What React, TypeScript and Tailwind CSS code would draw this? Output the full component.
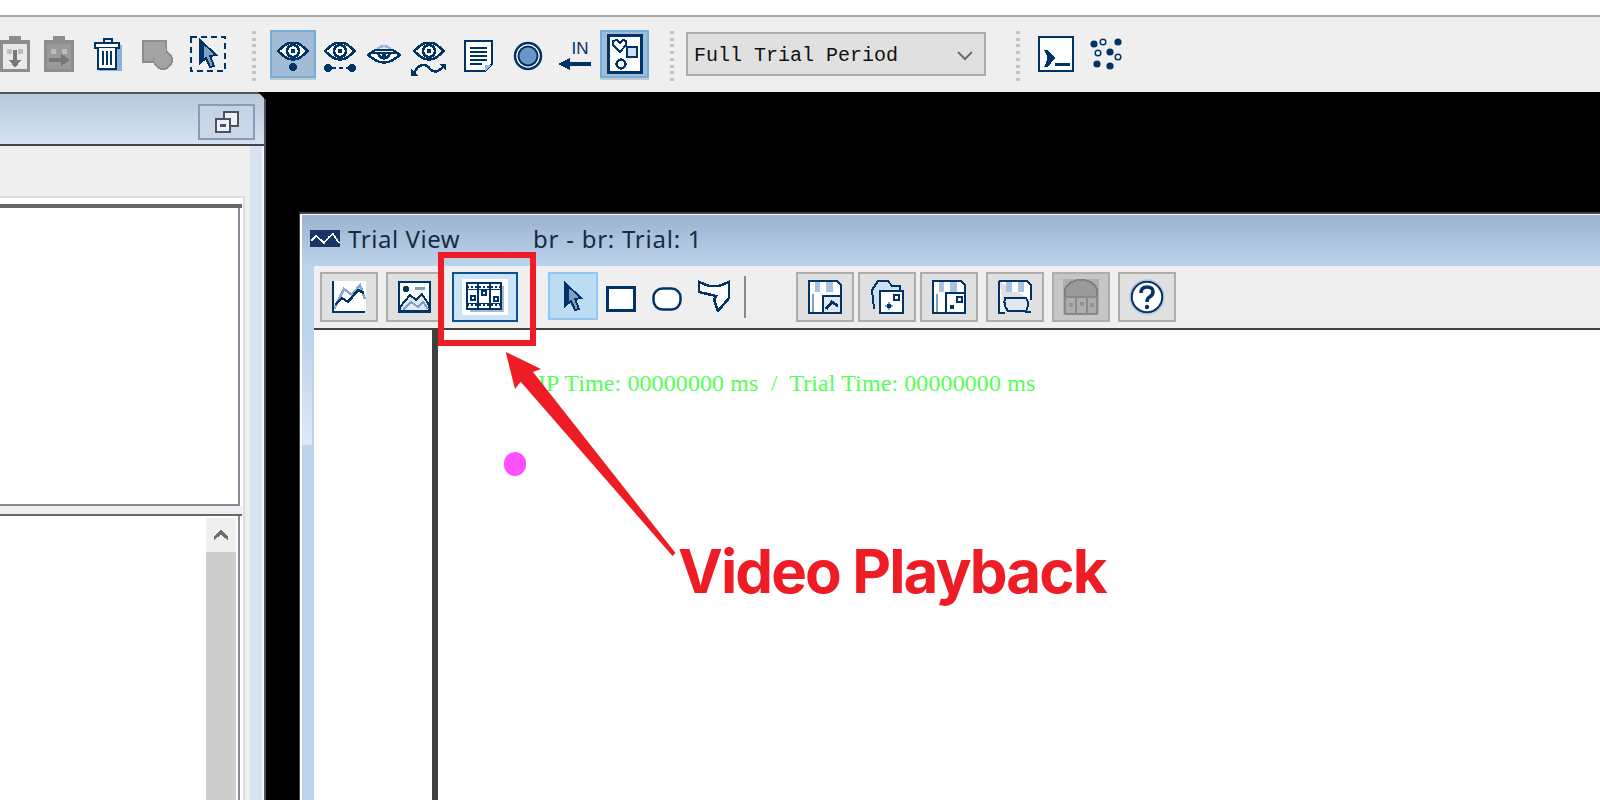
import React from "react";

const N = "#003366";
const L = "#7f9fc6";

function Eye({ y = 0, x = 0, closed = false }: { y?: number; x?: number; closed?: boolean }) {
  if (closed) {
    return (
      <g transform={`translate(${x},${y})`}>
        <path d="M10 5 Q17 -1 24 5" fill="none" stroke="#9db7d6" strokeWidth="2.5" />
        <path d="M1 11 L8 6 H26 L33 11 L26 16 Q17 21 8 16 Z" fill="#fff" stroke={N} strokeWidth="2.5" />
        <path d="M4 8 H30 V10 H4 Z" fill={N} />
        <path d="M11 10 Q17 19 23 10" fill="none" stroke={N} strokeWidth="2.5" />
        <rect x="15" y="10" width="4" height="3" fill={N} />
      </g>
    );
  }
  return (
    <g transform={`translate(${x},${y})`}>
      <path d="M1 9 L8 3 Q16 -2 24 3 L31 9 L24 15 Q16 20 8 15 Z" fill="#fff" stroke={N} strokeWidth="2.5" />
      <circle cx="16" cy="9" r="6" fill="#fff" stroke={N} strokeWidth="2.5" />
      <rect x="14" y="7" width="4" height="4" fill={N} />
    </g>
  );
}

function Svg({ w, h, ml = 0, mt = 0, children, smooth = false }: { w: number; h: number; ml?: number; mt?: number; children: React.ReactNode; smooth?: boolean }) {
  return (
    <svg
      width={w}
      height={h}
      viewBox={`0 0 ${w} ${h}`}
      style={{ marginLeft: ml, marginTop: mt, flex: "none", display: "block" }}
      shapeRendering={smooth ? "geometricPrecision" : "crispEdges"}
    >
      {children}
    </svg>
  );
}

function Grip({ ml }: { ml: number }) {
  return (
    <div style={{ marginLeft: ml }} className="mt-[14px] flex h-[50px] w-[4px] flex-none flex-col justify-between">
      {[0, 1, 2, 3, 4, 5, 6, 7].map((i) => (
        <div key={i} className="h-[3px] w-[4px] bg-[#c4c4c4]" />
      ))}
    </div>
  );
}

function Clip({ right }: { right?: boolean }) {
  const g = "#8d8d8d";
  return (
    <>
      <rect x="0" y="4" width="30" height="32" fill={g} />
      <rect x="3" y="8" width="24" height="25" fill={right ? "#9a9a9a" : "#e9e9e9"} />
      <rect x="9" y="0" width="12" height="7" fill={g} />
      <rect x="5" y="4" width="20" height="4" fill={g} />
      <rect x="7" y="13" width="5" height="5" fill="#bdbdbd" />
      <rect x="18" y="13" width="5" height="5" fill="#bdbdbd" />
      {right ? (
        <path d="M5 22 H17 V18 L26 24 L17 30 V26 H5 Z" fill="#777" />
      ) : (
        <path d="M13 14 H17 V24 H21 L15 32 L9 24 H13 Z" fill="#777" />
      )}
    </>
  );
}

function Trash() {
  return (
    <>
      <rect x="5" y="7" width="23" height="26" fill="#8fb0d6" />
      <path d="M10 4 V1 H18 V4" fill="none" stroke={N} strokeWidth="2" />
      <path d="M1 5 H25 V10 H1 Z" fill="#fff" stroke={N} strokeWidth="2" />
      <path d="M4 10 V31 H22 V10" fill="#fff" stroke={N} strokeWidth="2.5" />
      <path d="M9 13 V27 M13 13 V27 M17 13 V27" stroke={N} strokeWidth="2" />
    </>
  );
}

function Cursor({ x = 0, y = 0 }: { x?: number; y?: number }) {
  return (
    <g transform={`translate(${x},${y})`}>
      <path d="M2 1 L18 16 L12 17 L16 27 L12 28 L8 19 L2 24 Z" fill={L} stroke={N} strokeWidth="2" />
      <path d="M2 1 V24 L6 21 V6 Z" fill={N} />
    </g>
  );
}

function SmallBtn({ children, disabled, ml = 8 }: { children: React.ReactNode; disabled?: boolean; ml?: number }) {
  return (
    <div
      style={{ marginLeft: ml }}
      className={`flex h-[50px] w-[58px] flex-none items-center justify-center border-2 border-[#adadad] ${disabled ? "bg-[#c6c6c6]" : "bg-[#e0e0e0]"}`}
    >
      {children}
    </div>
  );
}

function Floppy({ children }: { children?: React.ReactNode }) {
  return (
    <Svg w={34} h={34}>
      <path d="M1 1 H29 L33 5 V33 H1 Z" fill="#fff" stroke={N} strokeWidth="2" />
      <rect x="7" y="2" width="18" height="10" fill="#a9c2df" />
      <rect x="12" y="2" width="6" height="10" fill="#fff" />
      <rect x="4" y="14" width="2" height="18" fill="#7f9fc6" />
      {children}
    </Svg>
  );
}

export default function App() {
  return (
    <div className="relative flex h-[800px] w-[1600px] flex-col overflow-hidden bg-white font-['Noto_Sans',sans-serif]">
      {/* header strip */}
      <div className="h-[15px] flex-none bg-white" />
      <div className="flex h-[77px] flex-none items-start border-t-2 border-[#a6a6a6] bg-[#efefef]">
        <Svg w={30} h={36} mt={19}><Clip /></Svg>
        <Svg w={32} h={36} ml={14} mt={19}><Clip right /></Svg>
        <Svg w={30} h={34} ml={18} mt={21}><Trash /></Svg>
        <Svg w={32} h={30} ml={18} mt={23}>
          <rect x="1" y="1" width="23" height="21" fill="#a3a3a3" stroke="#8d8d8d" strokeWidth="2" />
          <circle cx="21" cy="20" r="9" fill="#a3a3a3" stroke="#8d8d8d" strokeWidth="2" />
          <rect x="12" y="8" width="12" height="14" fill="#a3a3a3" />
        </Svg>
        <Svg w={36} h={36} ml={16} mt={19}>
          <rect x="1" y="1" width="34" height="34" fill="none" stroke={N} strokeWidth="2" strokeDasharray="6 4" />
          <Cursor x={8} y={3} />
        </Svg>
        <Grip ml={26} />
        {/* active eye */}
        <div className="relative ml-[14px] mt-[13px] flex h-[48px] w-[46px] flex-none flex-col items-center border-2 border-[#73aee0] bg-[#a3bcd5] pt-[10px] shadow-[0_2px_0_#c8c8c8]">
          <Svg w={32} h={32}>
            <Eye />
            <circle cx="16" cy="25" r="4" fill={N} />
          </Svg>
        </div>
        <Svg w={34} h={36} ml={7} mt={25}>
          <Eye x={1} />
          <circle cx="5" cy="26" r="4" fill={N} />
          <circle cx="29" cy="26" r="4" fill={N} />
          <path d="M9 26 H25" stroke={N} strokeWidth="2" strokeDasharray="4 3" />
        </Svg>
        <Svg w={34} h={24} ml={10} mt={27}><Eye closed /></Svg>
        <Svg w={36} h={36} ml={10} mt={25}>
          <Eye x={2} />
          <path d="M2 32 L7 25 Q14 20 19 27 Q25 33 33 24" fill="none" stroke={N} strokeWidth="2.5" />
          <path d="M0 34 V27 L7 34 Z M35 22 V29 L28 22 Z" fill={N} />
        </Svg>
        <Svg w={30} h={32} ml={17} mt={23}>
          <path d="M1 1 H28 V24 L21 31 H1 Z" fill="#fff" stroke={N} strokeWidth="2.5" />
          <path d="M6 8 H23 M6 12 H23 M6 16 H23 M6 20 H23 M6 24 H18" stroke={N} strokeWidth="2" />
          <path d="M21 31 V25 H28 Z" fill="#9db7d6" />
        </Svg>
        <Svg w={30} h={30} ml={19} mt={24} smooth>
          <circle cx="15" cy="15" r="13" fill="#fff" stroke={N} strokeWidth="2.5" />
          <circle cx="15" cy="15" r="9.5" fill="#6b94c7" stroke={N} strokeWidth="2" />
        </Svg>
        <div className="ml-[15px] mt-[23px] flex w-[34px] flex-none flex-col items-center">
          <span className="ml-[10px] font-['Liberation_Sans',sans-serif] text-[17px] leading-[17px] text-[#003366]">IN</span>
          <Svg w={34} h={14}>
            <path d="M0 7 L12 1 V5 H33 V9 H12 V13 Z" fill={N} />
          </Svg>
        </div>
        <div className="ml-[8px] mt-[13px] flex h-[48px] w-[49px] flex-none items-center justify-center border-2 border-[#73aee0] bg-[#a3bcd5] shadow-[0_2px_0_#c8c8c8]">
          <Svg w={36} h={40}>
            <rect x="1.5" y="1.5" width="33" height="37" fill="#fff" stroke={N} strokeWidth="3" />
            <path d="M6 7 L10 6 L13 9 L16 6 L19 7 V11 L13 18 L6 11 Z" fill="#fff" stroke={N} strokeWidth="2" />
            <rect x="20" y="13" width="10" height="10" fill="#cfdff0" stroke={N} strokeWidth="2" />
            <circle cx="14" cy="30" r="4.5" fill="#fff" stroke={N} strokeWidth="2.5" />
          </Svg>
        </div>
        <Grip ml={21} />
        <div className="ml-[12px] mt-[15px] flex h-[44px] w-[300px] flex-none items-center border-2 border-[#adadad] bg-[#e0e0e0] pl-[6px] pr-[10px] pt-[4px]">
          <span className="flex-1 whitespace-pre font-['Liberation_Mono',monospace] text-[20px] leading-none text-[#111]">Full Trial Period</span>
          <Svg w={18} h={10} smooth>
            <path d="M2 1 L9 8 L16 1" fill="none" stroke="#6e6e6e" strokeWidth="2" />
          </Svg>
        </div>
        <Grip ml={30} />
        <div className="ml-[18px] mt-[19px] h-[36px] w-[36px] flex-none">
          <Svg w={36} h={36}>
            <rect x="1" y="1" width="34" height="34" fill="#fff" stroke={N} strokeWidth="2.5" />
            <path d="M6 14 H10 L17 22 L10 31 H6 Q12 22 6 14 Z" fill={N} />
            <rect x="17" y="27" width="15" height="3" fill={N} />
          </Svg>
        </div>
        <Svg w={34} h={32} ml={16} mt={21} smooth>
          {[[4, 6], [28, 4], [20, 14], [20, 28], [7, 26]].map(([x, y], i) => (
            <circle key={i} cx={x} cy={y} r="3.6" fill={N} />
          ))}
          {[[13, 4], [8, 15], [28, 19]].map(([x, y], i) => (
            <circle key={i} cx={x} cy={y} r="2.8" fill="#fff" stroke={N} strokeWidth="1.5" />
          ))}
        </Svg>
      </div>

      {/* desktop */}
      <div className="flex min-h-0 flex-1 bg-black">
        {/* left panel */}
        <div className="flex h-full w-[266px] flex-none flex-col border-r-2 border-t-2 border-[#555] [clip-path:polygon(0_0,258px_0,266px_8px,266px_100%,0_100%)]">
          <div className="flex h-[52px] flex-none items-start justify-end border-b-2 border-[#444] bg-gradient-to-b from-[#b8c9da] to-[#d5e3f0] pr-[9px] pt-[10px]">
            <div className="flex h-[36px] w-[57px] items-center justify-center border-2 border-[#8a9ab8] bg-[#c8d5e4]/60">
              <Svg w={24} h={22}>
                <rect x="9" y="1" width="14" height="14" fill="#eef1f5" stroke="#4c5266" strokeWidth="2" />
                <rect x="1" y="8" width="14" height="13" fill="#eef1f5" stroke="#4c5266" strokeWidth="2" />
                <rect x="5" y="13" width="6" height="3" fill="#4c5266" />
              </Svg>
            </div>
          </div>
          <div className="flex min-h-0 flex-1">
            <div className="min-w-0 flex-1 bg-[#efefef] pt-[50px]">
              <div className="mr-[5px] flex h-full flex-col border-r-2 border-t-2 border-[#dcdcdc] bg-white pt-[6px]">
                <div className="w-[242px]">
                  <div className="h-[302px] border-t-4 border-[#666]">
                    <div className="mr-[2px] h-full border-b-2 border-r-2 border-[#858a96] bg-white" />
                  </div>
                  <div className="h-[8px] bg-[#efefef]" />
                </div>
                <div className="w-[242px] flex-1 border-t-2 border-[#666]">
                  <div className="mr-[2px] flex h-full justify-end border-r-2 border-[#858a96] bg-white pr-[2px] pt-[2px]">
                    <div className="flex h-full w-[30px] flex-col">
                      <div className="flex h-[34px] flex-none items-center justify-center bg-[#efefef]">
                        <Svg w={16} h={12}>
                          <path d="M1 11 V7 L8 1 L15 7 V11 L8 6 Z" fill="#6e6e6e" />
                        </Svg>
                      </div>
                      <div className="flex-1 bg-[#cccccc]" />
                    </div>
                  </div>
                </div>
              </div>
            </div>
            <div className="w-[12px] flex-none bg-[#d6e3f1]" />
            <div className="w-[2px] flex-none bg-[#f4f7fb]" />
          </div>
        </div>

        {/* Trial View window */}
        <div className="ml-[33px] mt-[120px] flex min-w-0 flex-1 flex-col border-l border-t-2 border-[#444]">
          <div className="flex min-h-0 flex-1 flex-col border-l-2 border-t border-white">
            <div className="flex h-[51px] flex-none items-center bg-gradient-to-b from-[#9bb3d0] to-[#bcd3ec] pb-[3px] pl-[8px] text-[24px] leading-none text-[#1a2a44]">
              <Svg w={30} h={17} mt={-2}>
                <rect width="30" height="17" fill="#1a3564" />
                <path d="M1 11 L6 6 L11 10 L14 13 L19 7 L23 4 L29 13" fill="none" stroke="#fff" strokeWidth="1.5" />
              </Svg>
              <span className="ml-[8px] w-[185px] flex-none whitespace-pre tracking-[0.55px]">Trial View</span>
              <span className="whitespace-pre tracking-[0.75px]">br - br: Trial: 1</span>
            </div>
            <div className="flex min-h-0 flex-1">
              <div className="w-[12px] flex-none bg-[#bcd3ec] pt-[70px]">
                <div className="mr-[2px] h-[109px] bg-gradient-to-b from-[#bcd3ec] to-[#dde9f6]" />
              </div>
              <div className="flex min-w-0 flex-1 flex-col">
                <div className="flex h-[64px] flex-none items-start border-b-2 border-[#404040] bg-[#efefef] pt-[6px]">
                  <SmallBtn ml={6}>
                    <Svg w={34} h={32}>
                      <rect x="2" y="0" width="32" height="30" fill="#fff" />
                      <path d="M2 28 L12 8 L20 14 L28 4 L33 18" fill="none" stroke="#8aa8cb" strokeWidth="2.5" />
                      <path d="M3 24 L10 17 L16 21 L26 9 L32 12" fill="none" stroke={N} strokeWidth="2.5" />
                      <path d="M1 0 V31 H33" fill="none" stroke={N} strokeWidth="2" />
                    </Svg>
                  </SmallBtn>
                  <SmallBtn>
                    <Svg w={34} h={32}>
                      <rect x="1" y="1" width="31" height="30" fill="#fff" stroke={N} strokeWidth="2" />
                      <circle cx="8" cy="8" r="3" fill={N} />
                      <rect x="17" y="6" width="10" height="3" fill={L} />
                      <path d="M2 26 L12 14 L18 19 L24 13 L31 24 V30 H2 Z" fill="#dfe8f3" stroke={N} strokeWidth="2" />
                      <path d="M5 29 L13 21 L20 26 L25 21 L30 28" fill="none" stroke={L} strokeWidth="2" />
                    </Svg>
                  </SmallBtn>
                  <div className="ml-[8px] flex h-[50px] w-[66px] flex-none items-center justify-center border-2 border-[#0b5394] bg-[#cce4f7]">
                    <div className="flex h-[36px] w-[46px] items-center justify-center bg-white">
                      <Svg w={38} h={30}>
                        <rect x="4" y="4" width="34" height="26" fill="#a9bbd2" />
                        <rect x="1" y="1" width="34" height="26" fill="#fff" stroke={N} strokeWidth="2" />
                        <path d="M1 5 H35 M1 23 H35" stroke={N} strokeWidth="2" strokeDasharray="2 2" />
                        <path d="M1 7 H35 M1 21 H35" stroke={N} strokeWidth="1" />
                        <path d="M12 1 V27 M24 1 V27" stroke={N} strokeWidth="2" />
                        <rect x="5" y="14" width="4" height="4" fill="#fff" stroke={N} strokeWidth="1.5" />
                        <rect x="16" y="9" width="4" height="4" fill="#fff" stroke={N} strokeWidth="1.5" />
                        <rect x="28" y="15" width="4" height="4" fill="#fff" stroke={N} strokeWidth="1.5" />
                      </Svg>
                    </div>
                  </div>
                  <div className="ml-[30px] flex h-[48px] w-[50px] flex-none items-center justify-center border-2 border-[#90c8f6] bg-[#bcdcf4]">
                    <Svg w={20} h={32}><Cursor y={2} /></Svg>
                  </div>
                  <Svg w={30} h={26} ml={8} mt={14}>
                    <rect x="1.5" y="1.5" width="27" height="23" fill="#fff" stroke={N} strokeWidth="3" />
                  </Svg>
                  <Svg w={30} h={24} ml={16} mt={15} smooth>
                    <rect x="1.5" y="1.5" width="27" height="21" rx="9" fill="#fff" stroke={N} strokeWidth="2.5" />
                  </Svg>
                  <Svg w={32} h={32} ml={16} mt={8}>
                    <path d="M1 2 L11 6 L21 6 L31 2 V18 L20 31 L16 20 L18 16 L1 12 Z" fill="#fff" stroke={N} strokeWidth="2.5" />
                  </Svg>
                  <div className="ml-[14px] mt-[4px] h-[42px] w-[2px] flex-none bg-[#8a8a8a]" />
                  <SmallBtn ml={50}>
                    <Floppy>
                      <rect x="15" y="16" width="18" height="17" fill="#dfe8f3" stroke={N} strokeWidth="2" />
                      <path d="M18 29 L24 22 L30 26" fill="none" stroke={N} strokeWidth="3" />
                    </Floppy>
                  </SmallBtn>
                  <SmallBtn ml={4}>
                    <Svg w={34} h={34}>
                      <path d="M4 29 L2 10 L8 1 H18 L22 6 H30 V12" fill="#cfdff0" stroke={N} strokeWidth="2" />
                      <rect x="10" y="11" width="23" height="22" fill="#fff" stroke={N} strokeWidth="2" />
                      <rect x="24" y="15" width="5" height="5" fill="#fff" stroke={N} strokeWidth="2" />
                      <path d="M19 22 V30 M15 26 H23" stroke={L} strokeWidth="2" />
                      <rect x="17" y="24" width="4" height="4" fill={N} />
                    </Svg>
                  </SmallBtn>
                  <SmallBtn ml={4}>
                    <Floppy>
                      <rect x="14" y="13" width="19" height="20" fill="#fff" stroke={N} strokeWidth="2" />
                      <rect x="25" y="17" width="5" height="5" fill="#fff" stroke={N} strokeWidth="2" />
                      <rect x="18" y="25" width="4" height="4" fill={N} />
                    </Floppy>
                  </SmallBtn>
                  <SmallBtn ml={8}>
                    <Svg w={34} h={34}>
                      <path d="M1 1 H29 L33 5 V20 M1 1 V33 H7" fill="#fff" stroke={N} strokeWidth="2" />
                      <rect x="8" y="2" width="18" height="10" fill="#a9c2df" />
                      <rect x="14" y="2" width="6" height="10" fill="#fff" />
                      <path d="M7 18 H28 Q32 24 28 31 H10 Q5 25 7 18 Z" fill="#dfe8f3" stroke={N} strokeWidth="2" />
                      <rect x="27" y="31" width="6" height="2" fill={N} />
                    </Svg>
                  </SmallBtn>
                  <SmallBtn disabled ml={8}>
                    <Svg w={36} h={36}>
                      <rect x="0" y="0" width="36" height="36" fill="#adadad" />
                      <path d="M2 18 V10 Q6 1 18 1 Q30 1 34 10 V18 Z" fill="#9a9a9a" stroke="#808080" strokeWidth="2" />
                      <path d="M2 18 H34 M2 35 H34 M2 18 V35 M34 18 V35 M13 18 V35 M24 18 V35" stroke="#8a8a8a" strokeWidth="2" />
                      <rect x="6" y="24" width="4" height="4" fill="#929292" />
                      <rect x="17" y="23" width="4" height="4" fill="#929292" />
                      <rect x="27" y="24" width="4" height="4" fill="#929292" />
                    </Svg>
                  </SmallBtn>
                  <SmallBtn ml={8}>
                    <Svg w={36} h={36} smooth>
                      <circle cx="18" cy="18" r="15.5" fill="#fff" stroke={N} strokeWidth="2.5" />
                      <circle cx="18" cy="18" r="17" fill="none" stroke="#b6c6dc" strokeWidth="1.5" />
                      <path d="M12 14 Q12 8 18 8 Q24 8 24 13 Q24 16 20.5 18 Q18 19.5 18 23" fill="none" stroke={N} strokeWidth="3.5" />
                      <circle cx="18" cy="28" r="2.2" fill={N} />
                    </Svg>
                  </SmallBtn>
                </div>
                <div className="flex min-h-0 flex-1 bg-white">
                  <div className="w-[118px] flex-none" />
                  <div className="w-[6px] flex-none bg-[#404040]" />
                  <div className="flex min-w-0 flex-1 flex-col">
                    <div className="ml-[100px] mt-[38px] whitespace-pre font-['Liberation_Serif',serif] text-[24px] leading-[30px] tracking-[0.1px] text-[#55ff55]">
                      IP Time: 00000000 ms  /  Trial Time: 00000000 ms
                    </div>
                    <div className="ml-[66px] mt-[54px] h-[24px] w-[22px] rounded-full bg-[#ff50ff]" />
                  </div>
                </div>
              </div>
            </div>
          </div>
        </div>
      </div>

      {/* annotation overlay */}
      <div className="absolute left-[438px] top-[252px] h-[94px] w-[98px] border-[6px] border-[#ee1c25]" />
      <svg className="absolute left-0 top-0" width="1600" height="800" viewBox="0 0 1600 800">
        <polygon points="505.7,352 541,369 533,372 675.5,553 672.5,556 520.7,381.7 515,389" fill="#ee1c25" />
      </svg>
      <div className="absolute left-[678px] top-[535px] whitespace-pre font-['Inter',sans-serif] text-[60px] font-bold leading-[72px] tracking-[-1.9px] text-[#ee1c25]">
        Video Playback
      </div>
    </div>
  );
}
